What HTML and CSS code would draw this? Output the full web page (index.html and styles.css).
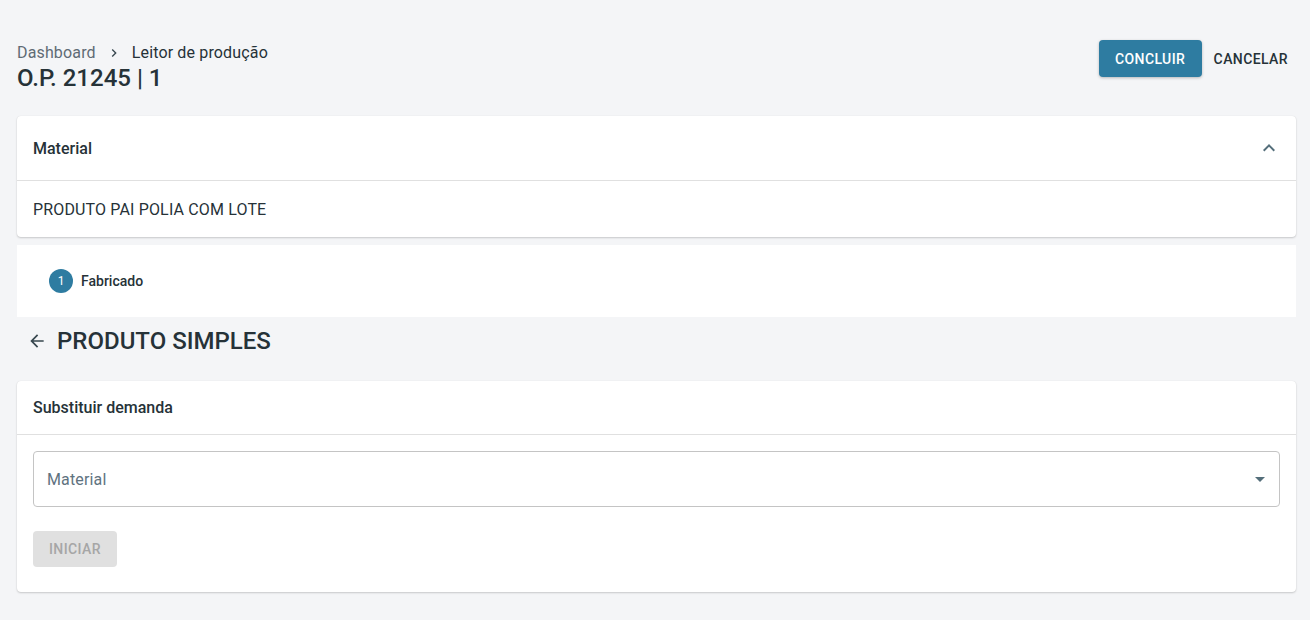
FILE: index.html
```html
<!DOCTYPE html>
<html lang="pt">
<head>
<meta charset="utf-8">
<title>Leitor de produção</title>
<link rel="stylesheet" href="styles.css">
</head>
<body>
<div class="page">
  <header class="top">
    <div class="titles">
      <nav class="crumbs">
        <span class="crumb-link">Dashboard</span>
        <svg class="crumb-sep" viewBox="0 0 24 24" width="16" height="16"><path d="M10 6 8.59 7.41 13.17 12l-4.58 4.59L10 18l6-6z" fill="currentColor"/></svg>
        <span class="crumb-current">Leitor de produção</span>
      </nav>
      <h1 class="title">O.P. 21245 | 1</h1>
    </div>
    <div class="actions">
      <button class="btn btn-primary">CONCLUIR</button>
      <button class="btn btn-text">CANCELAR</button>
    </div>
  </header>

  <section class="card">
    <div class="card-head card-head-tall">
      <span class="card-title">Material</span>
      <svg class="chev" viewBox="0 0 24 24" width="24" height="24"><path d="M7.41 15.41 12 10.83l4.59 4.58L18 14l-6-6-6 6z" fill="currentColor"/></svg>
    </div>
    <div class="card-body card-body-text">PRODUTO PAI POLIA COM LOTE</div>
  </section>

  <div class="stepper">
    <div class="step">
      <span class="step-num">1</span>
      <span class="step-label">Fabricado</span>
    </div>
  </div>

  <div class="section-title">
    <svg class="back" viewBox="0 0 24 24" width="20" height="20"><path d="M20 11H7.83l5.59-5.59L12 4l-8 8 8 8 1.41-1.41L7.83 13H20v-2z" fill="currentColor"/></svg>
    <h2>PRODUTO SIMPLES</h2>
  </div>

  <section class="card">
    <div class="card-head">
      <span class="card-title">Substituir demanda</span>
    </div>
    <div class="card-body form">
      <div class="select">
        <span class="select-label">Material</span>
        <svg class="caret" viewBox="0 0 24 24" width="24" height="24"><path d="M7 10l5 5 5-5z" fill="currentColor"/></svg>
      </div>
      <div>
        <button class="btn btn-disabled" disabled>INICIAR</button>
      </div>
    </div>
  </section>
</div>
</body>
</html>
```
FILE: styles.css
```css
* { box-sizing: border-box; }
html, body { margin: 0; padding: 0; }
body {
  background: #f4f5f7;
  font-family: Roboto, "Liberation Sans", Arial, sans-serif;
  color: #263238;
}
.page {
  padding: 41px 14px 20px 17px;
}
.top {
  display: flex;
  justify-content: space-between;
  align-items: flex-start;
  margin-bottom: 24px;
}
.crumbs {
  display: flex;
  align-items: center;
  font-size: 16px;
  line-height: 24px;
  height: 24px;
  letter-spacing: 0.15px;
}
.crumb-link { color: #5f6b75; }
.crumb-sep { color: #37474f; margin: 0 10px 0 10px; }
.crumb-current { color: #263238; }
.title {
  margin: -1px 0 0;
  font-size: 24px;
  line-height: 28px;
  font-weight: 500;
  color: #263238;
  letter-spacing: 0;
}
.actions {
  display: flex;
  align-items: center;
  gap: 4px;
  margin-top: -1px;
}
.btn {
  font-family: inherit;
  font-size: 14px;
  font-weight: 500;
  letter-spacing: 0.4px;
  border: none;
  border-radius: 4px;
  padding: 0 16px;
  height: 37px;
  cursor: pointer;
}
.btn-primary {
  background: #2e7ca1;
  color: #fff;
  box-shadow: 0 1px 3px rgba(0,0,0,0.25);
  width: 103px;
  margin-left: 1px;
}
.btn-text {
  background: transparent;
  color: #263238;
  padding: 0 8px;
}
.card {
  background: #fff;
  border-radius: 4px;
  box-shadow: 0 1px 2px rgba(0,0,0,0.18), 0 0 1px rgba(0,0,0,0.1);
}
.card-head {
  display: flex;
  align-items: center;
  justify-content: space-between;
  padding: 0 16px;
  height: 54px;
  border-bottom: 1px solid #e0e0e0;
}
.card-head-tall { height: 65px; }
.card-title {
  font-size: 16px;
  font-weight: 500;
  color: #263238;
}
.chev { color: #546e7a; margin-right: -1px; }
.card-body-text {
  padding: 0 16px;
  height: 56px;
  display: flex;
  align-items: center;
  font-size: 16px;
  letter-spacing: 0.15px;
  color: #263238;
}
.stepper {
  background: #fff;
  margin-top: 8px;
  height: 72px;
  display: flex;
  align-items: center;
  padding-left: 32px;
}
.step {
  display: flex;
  align-items: center;
  gap: 8px;
}
.step-num {
  width: 24px;
  height: 24px;
  border-radius: 50%;
  background: #2e7ca1;
  color: #fff;
  font-size: 12px;
  display: flex;
  align-items: center;
  justify-content: center;
}
.step-label {
  font-size: 14px;
  font-weight: 500;
  color: #263238;
}
.section-title {
  display: flex;
  align-items: center;
  height: 48px;
  padding-left: 10px;
  margin-bottom: 16px;
}
.back { color: #37474f; margin-right: 10px; }
.section-title h2 {
  margin: 0;
  font-size: 24px;
  font-weight: 500;
  color: #263238;
  line-height: 28px;
}
.form {
  padding: 16px 16px 25px;
  display: flex;
  flex-direction: column;
  gap: 24px;
}
.select {
  height: 56px;
  border: 1px solid #c4c4c4;
  border-radius: 4px;
  display: flex;
  align-items: center;
  justify-content: space-between;
  padding: 0 7px 0 13px;
}
.select-label {
  font-size: 16px;
  letter-spacing: 0.15px;
  color: #5f737f;
}
.caret { color: #546e7a; }
.btn-disabled {
  background: #e0e0e0;
  color: #a6a6a6;
  height: 36px;
  width: 84px;
  cursor: default;
}
```
